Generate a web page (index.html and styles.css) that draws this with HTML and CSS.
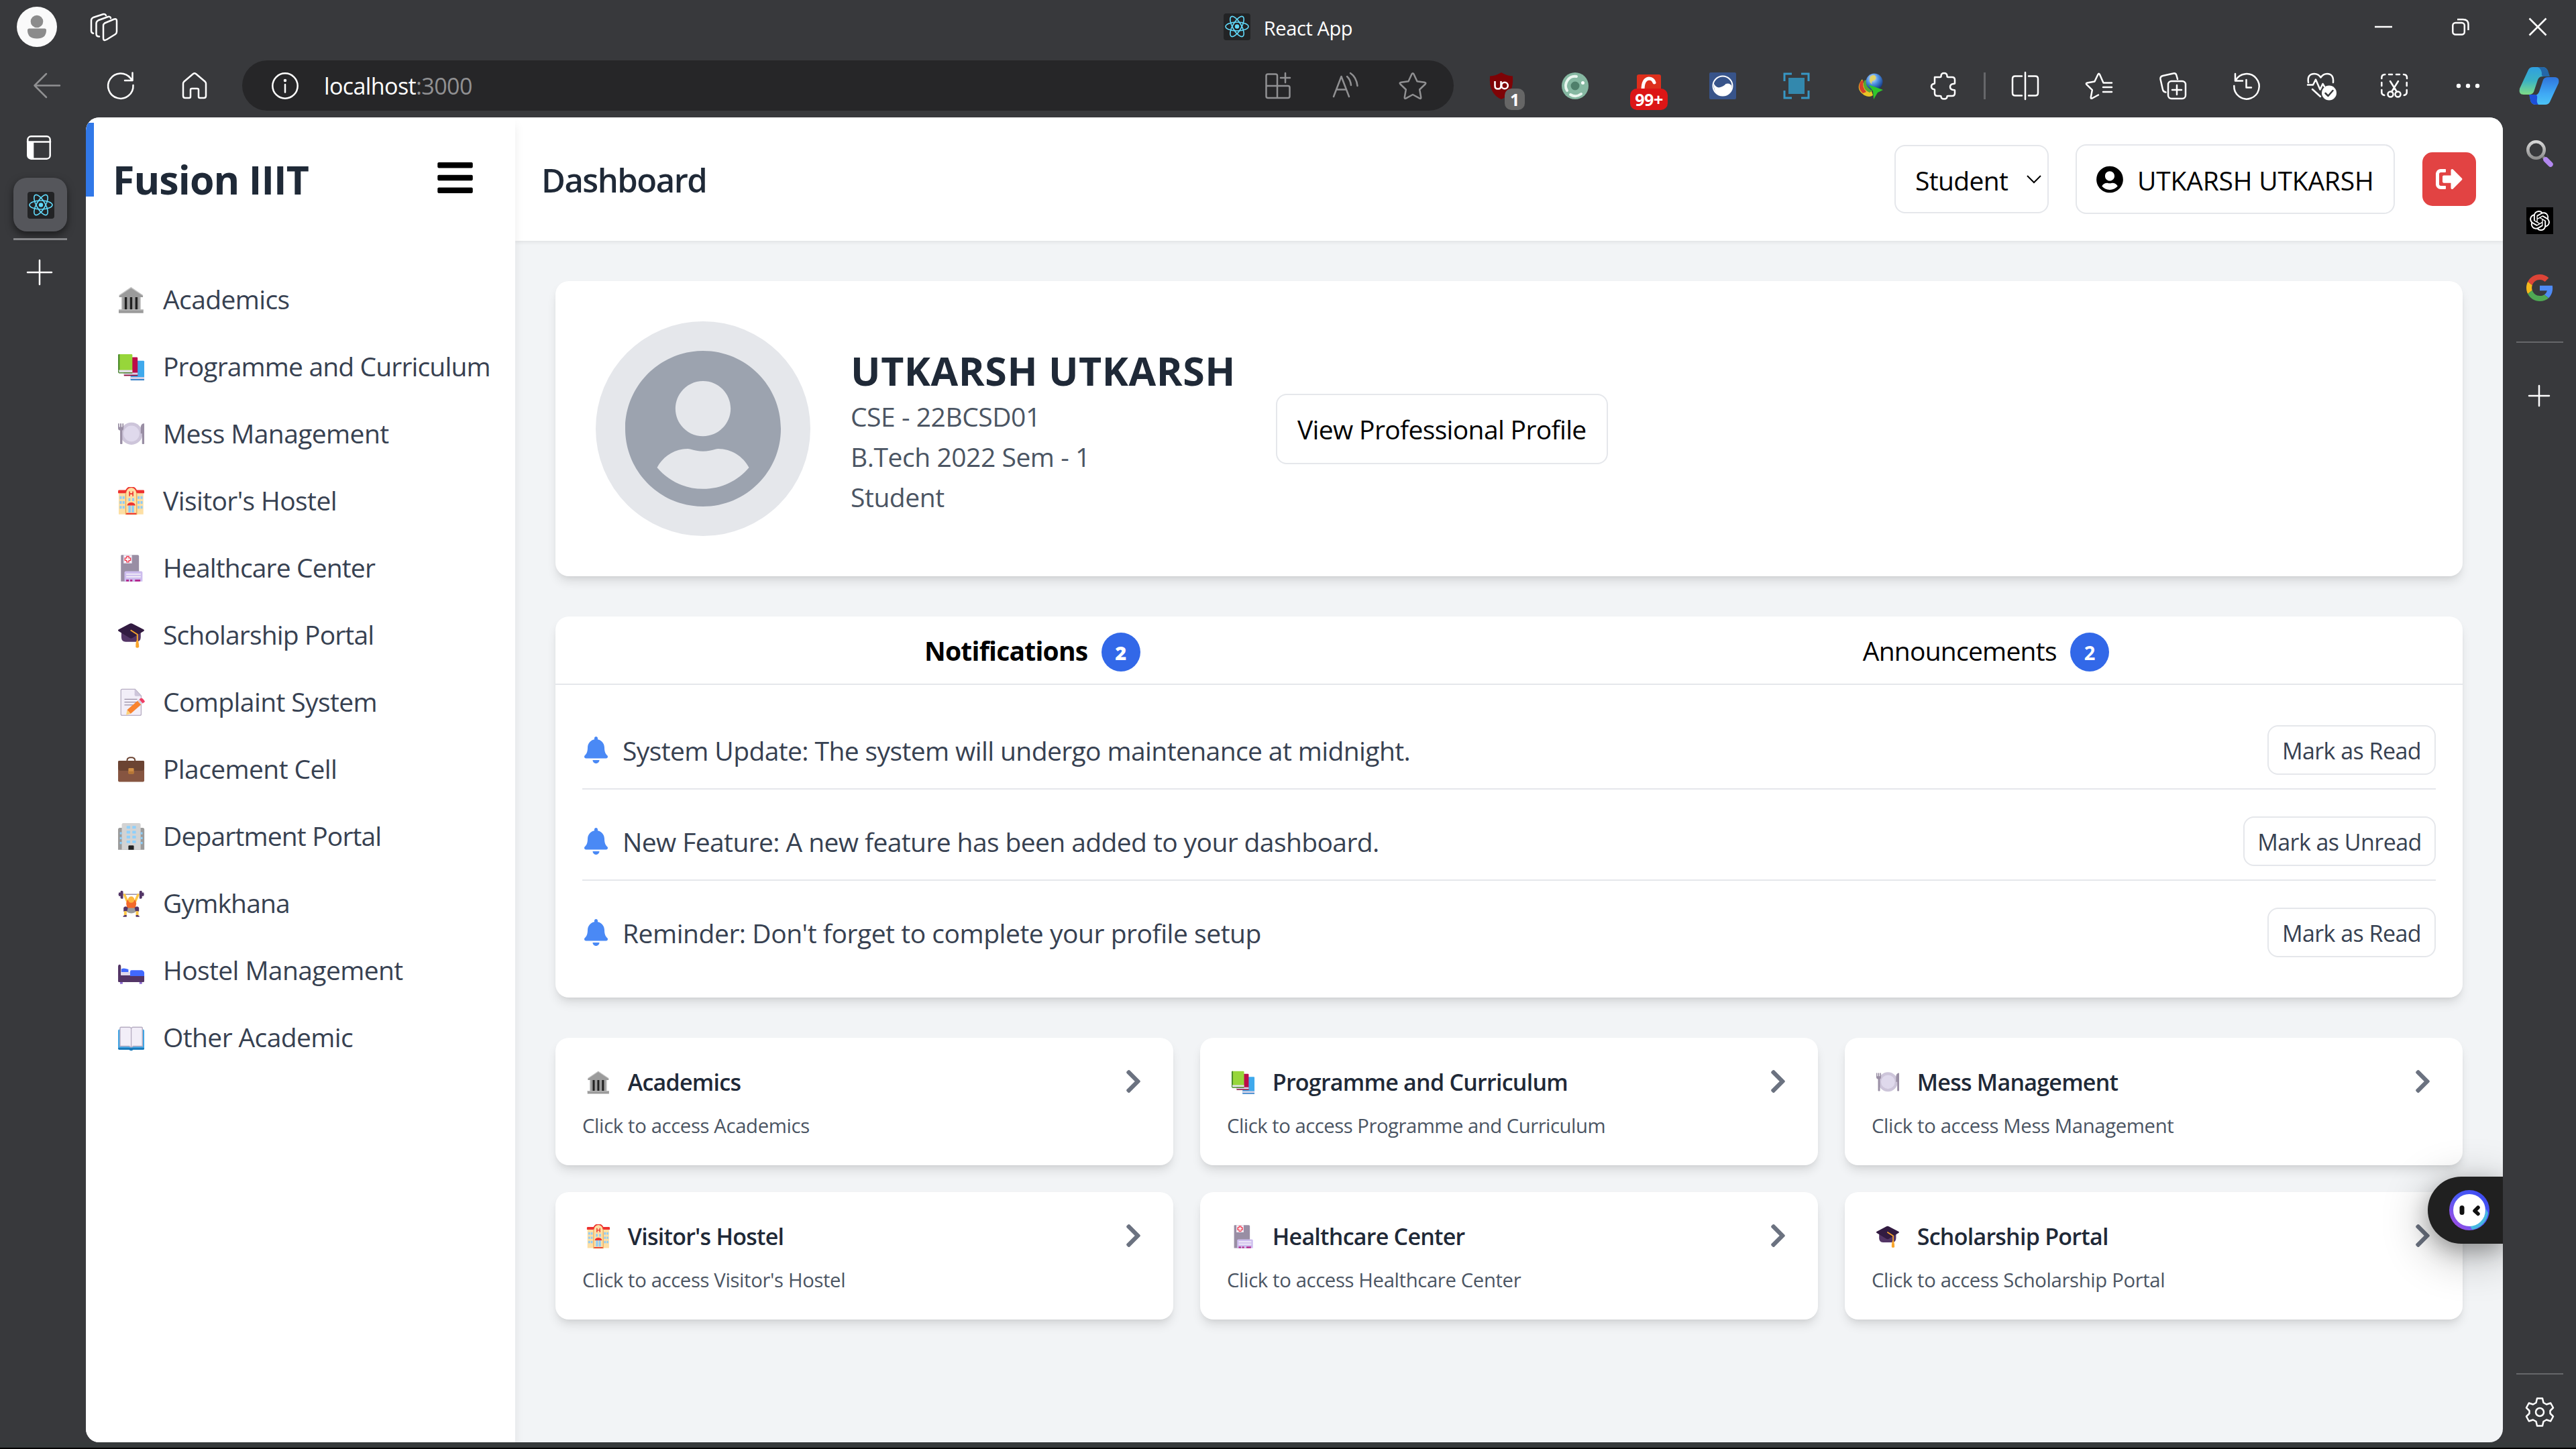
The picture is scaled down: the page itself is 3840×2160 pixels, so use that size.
FILE: index.html
```html
<!DOCTYPE html>
<html lang="en">
<head>
<meta charset="utf-8">
<title>React App</title>
<link rel="stylesheet" href="styles.css">
</head>
<body>
<svg class="defs" width="0" height="0" aria-hidden="true">
  <defs>
    <linearGradient id="lens" x1="0" y1="0" x2="0" y2="1"><stop offset="0" stop-color="#d6d6d6"/><stop offset="1" stop-color="#8f8f8f"/></linearGradient>
    <linearGradient id="cop1" x1="0" y1="0" x2="0" y2="1"><stop offset="0" stop-color="#2f9fe0"/><stop offset=".5" stop-color="#3bb3c4"/><stop offset="1" stop-color="#7fdc86"/></linearGradient>
    <linearGradient id="cop2" x1="0" y1="0" x2="0" y2="1"><stop offset="0" stop-color="#2f74dc"/><stop offset=".6" stop-color="#3fa9f5"/><stop offset="1" stop-color="#4cc3f5"/></linearGradient>
    <linearGradient id="bot" x1="0" y1="1" x2="1" y2="0"><stop offset="0" stop-color="#b44ae0"/><stop offset=".5" stop-color="#4d5bf5"/><stop offset="1" stop-color="#3b46f0"/></linearGradient>
    <radialGradient id="globe" cx=".4" cy=".3" r=".7"><stop offset="0" stop-color="#d8ecff"/><stop offset=".5" stop-color="#4d8fe0"/><stop offset="1" stop-color="#153a86"/></radialGradient>
  </defs>
  <symbol id="react" viewBox="0 0 40 40">
    <rect width="40" height="40" rx="4" fill="#222325"/>
    <g fill="none" stroke="#61dafb" stroke-width="1.6"><ellipse cx="20" cy="19.500" rx="17" ry="6.500"/><ellipse cx="20" cy="19.500" rx="17" ry="6.500" transform="rotate(60 20 19.500)"/><ellipse cx="20" cy="19.500" rx="17" ry="6.500" transform="rotate(120 20 19.500)"/></g>
    <circle cx="20" cy="19.500" r="3.200" fill="#61dafb"/>
  </symbol>
  <symbol id="user" viewBox="0 0 496 512"><path fill="currentColor" d="M248 8C111 8 0 119 0 256s111 248 248 248 248-111 248-248S385 8 248 8zm0 96c48.600 0 88 39.400 88 88s-39.400 88-88 88-88-39.400-88-88 39.400-88 88-88zm0 344c-58.700 0-111.300-26.600-146.500-68.200 18.800-35.400 55.600-59.800 98.500-59.800 2.400 0 4.800.4 7.100 1.100 13 4.200 26.600 6.900 40.900 6.900 14.300 0 28-2.700 40.900-6.900 2.300-.7 4.700-1.100 7.100-1.100 42.900 0 79.700 24.400 98.500 59.800C359.300 421.400 306.700 448 248 448z"/></symbol>
  <symbol id="bell" viewBox="0 0 448 512"><path fill="currentColor" d="M224 512c35.320 0 63.970-28.650 63.970-64H160.030c0 35.350 28.650 64 63.970 64zm215.390-149.710c-19.320-20.760-55.470-51.990-55.470-154.290 0-77.700-54.480-139.900-127.940-155.160V32c0-17.670-14.320-32-31.980-32s-31.980 14.330-31.980 32v20.840C118.560 68.100 64.080 130.300 64.080 208c0 102.300-36.150 133.530-55.470 154.290-6 6.450-8.660 14.160-8.610 21.710.11 16.400 12.980 32 32.100 32h383.800c19.120 0 32-15.600 32.100-32 .05-7.550-2.610-15.270-8.610-21.710z"/></symbol>
  <symbol id="chev" viewBox="0 0 320 512"><path fill="currentColor" d="M285.476 272.971L91.132 467.314c-9.373 9.373-24.569 9.373-33.941 0l-22.667-22.667c-9.357-9.357-9.375-24.522-.04-33.901L188.505 256 34.484 101.255c-9.335-9.379-9.317-24.544.04-33.901l22.667-22.667c9.373-9.373 24.569-9.373 33.941 0L285.475 239.030c9.373 9.372 9.373 24.568.001 33.941z"/></symbol>

  <symbol id="museum" viewBox="0 0 32 32">
    <path d="M2 11 15.500 2 29 11v2H2z" fill="#9b9b9b"/><path d="M2 11 15.500 2 29 11" fill="none" stroke="#c4c4c4" stroke-width="1"/>
    <path d="M4.500 13h22v14h-22z" fill="#9b9b9b"/><path d="M8.300 13h2.600v14H8.300zm6 0h2.600v14h-2.600zm6 0h2.600v14h-2.600z" fill="#212121"/>
    <path d="M4.500 13h1v14h-1zm21 0h1v14h-1z" fill="#d0d0d0"/><path d="M1.500 27h28v4h-28z" fill="#9b9b9b"/><path d="M1.500 27h28v1h-28z" fill="#b8b8b8"/>
  </symbol>
  <symbol id="books" viewBox="0 0 32 32">
    <path d="M15 9h14.500a1 1 0 0 1 1 1v20.500H15z" fill="#3fa9ec"/><path d="M15 27.500h15.500V30H15z" fill="#d9d3e6"/><path d="M15 30h15.500v1.200H15z" fill="#1f70c1"/>
    <path d="M7.500 5H22a1 1 0 0 1 1 1v19.800H7.500z" fill="#bb0c4a"/><path d="M7.500 22.500H23V25H7.500z" fill="#d9d3e6"/><path d="M7.500 25H23v1.200H7.500z" fill="#8d0a38"/>
    <path d="M1.500 1.500H16a1 1 0 0 1 1 1V22.500H1.500z" fill="#97d63a"/><path d="M.8 2.300q0-.8.8-.8h1V20h-1.800z" fill="#4d8c2c"/><path d="M1.500 19.500H17V22H1.500z" fill="#e4dff0"/><path d="M.8 20h1v2.200H17v1H2Q.8 23 .8 21.500z" fill="#3c7d25"/>
  </symbol>
  <symbol id="plate" viewBox="0 0 32 32">
    <circle cx="16" cy="15.500" r="12.600" fill="#cdc5da"/><circle cx="16" cy="15.500" r="9" fill="#dfd9ec"/>
    <path d="M.8 4h1.300v4h1V4h1.500v4h1V4H7v5.500q0 2-1.500 2.500L5.700 27q-1.300 1-2.600 0V12Q.8 11.500.8 9.500z" fill="#998ea4"/>
    <path d="M30.500 4v23q-1.200 1-2.500 0V15.500h-1.500V8q.5-4 4-4z" fill="#998ea4"/>
  </symbol>
  <symbol id="hotel" viewBox="0 0 32 32">
    <path d="M1.500 6h28v25h-28z" fill="#fddfa4"/><path d="M.8 4.500Q.8 3.500 2 3.500h27.500q1 0 1 1V7H.8z" fill="#ee3230"/>
    <path d="M9.500 31V6.500a6.200 6.200 0 0 1 12.400 0V31z" fill="#fddfa4" stroke="#e8aa55" stroke-width="1"/><path d="M9.300 6.500a6.400 6.400 0 0 1 12.800 0" fill="none" stroke="#ee3230" stroke-width="1.500"/>
    <path d="M13.800 5v5.500m3.800-5.500v5.500m-3.800-2.800h3.800" stroke="#ee3230" stroke-width="1.200"/>
    <path d="M2.600 10.500h2.300v3H2.600zm3.300 0h2.300v3H5.900zM2.600 16h2.300v3H2.600zm3.300 0h2.300v3H5.900zM2.600 21.500h2.300v3H2.600zm3.300 0h2.300v3H5.900zM23 10.500h2.300v3H23zm3.300 0h2.300v3h-2.300zM23 16h2.300v3H23zm3.300 0h2.300v3h-2.300zM23 21.500h2.300v3H23zm3.300 0h2.300v3h-2.300zM12.500 12.500h2.200v3.500h-2.200zm4.300 0H19v3.500h-2.200zM12.500 21h2.700v8h-2.700zm3.700 0h2.700v8h-2.700z" fill="#8ecbf7"/>
    <path d="M11 21q.5-3.500 4.700-3.500t4.700 3.500zM10 29.500h11.500V31H10z" fill="#ee3230"/>
  </symbol>
  <symbol id="clinic" viewBox="0 0 32 32">
    <path d="M4 2q0-1 1-1h18q1.500 0 1.500 1.500V31H4z" fill="#998ea4"/><path d="M7 1h9.500v9.500H7z" fill="#f2eef8"/>
    <path d="M10.600 2.500h2.400v2h2v2.600h-2v2h-2.400v-2h-2V4.500h2z" fill="#fff" stroke="#ee3248" stroke-width="1"/>
    <path d="M8 21q0-1.500 1.500-1.500h17.500q1.500 0 1.500 1.500v10H8z" fill="#cdbdee"/><path d="M10 22h16.500v1.500H10zm0 3h16.500v1.500H10z" fill="#f2eef8"/>
    <path d="M10 29h3v2h-3zm4.500 0h2.500v2h-2.500zm5.500 0h6v2h-6z" fill="#b4248c"/>
  </symbol>
  <symbol id="cap" viewBox="0 0 32 32">
    <path d="M4.500 13h22v5q0 5-5 5.500h-12q-5-.5-5-5.500z" fill="#533566"/><path d="M15.500 2.500q1 0 2 .6L30 9.500q1 .9 0 1.700L17 19q-1.500.8-3 0L1.200 11.200q-1-.8 0-1.700L13.500 3q1-.5 2-.5z" fill="#321b41"/>
    <path d="M15.500 10.500 22.700 15v8" fill="none" stroke="#f9a52c" stroke-width="1.500" stroke-linecap="round"/><path d="M21.500 22h2.200q1 5 .8 7.500-2 1.500-3.700 0-.3-3 .7-7.500z" fill="#f9a52c"/>
  </symbol>
  <symbol id="memo" viewBox="0 0 32 32">
    <path d="M4 2.500Q4 1 5.500 1H20l7 7.500v20.800q0 1.500-1.500 1.500h-20Q4 30.800 4 29.300z" fill="#f2eef8" stroke="#b6adc2" stroke-width="1"/><path d="M19.500 1.300 27 9h-6q-1.500 0-1.500-1.500z" fill="#cdc5da"/>
    <path d="M8 12.500h14.500M8 15.700h14M8 19h10" stroke="#998ea4" stroke-width="1"/>
    <path d="m11 24.500 12-10.500 4 4.500L15 29z" fill="#f9832e"/><path d="m11 24.500 4 4.500-5 1.200z" fill="#fbd17b"/><path d="m22.800 14.200 2-1.600 4 4.300-2 1.700z" fill="#d6d0de"/><path d="m24.800 12.600 1.500-1.100q1.500-.6 3 .8t2 3l-2.500 1.800z" fill="#ef3d64"/>
  </symbol>
  <symbol id="case" viewBox="0 0 32 32">
    <path d="M11 7V6q0-3 3-3.500h3Q20 3 20 6v1" fill="none" stroke="#6b4433" stroke-width="1.500"/><rect x=".8" y="6" width="29.700" height="24" rx="1.500" fill="#865541"/>
    <path d="M.8 7.500Q.8 6 2.300 6H29q1.500 0 1.500 1.500v7q0 3-3 3H4q-3.200 0-3.200-3z" fill="#6b4433"/><rect x="12.500" y="14.500" width="6.200" height="6.500" rx="1" fill="#d08f46"/><path d="M12.500 18h6.200v2q0 1-1 1h-4.200q-1 0-1-1z" fill="#b67636"/>
  </symbol>
  <symbol id="office" viewBox="0 0 32 32">
    <path d="M.8 8q0-2 2-2h26q1.800 0 1.800 2v23H.8z" fill="#9b9b9b"/><path d="M5 2.500Q5 .8 6.700.8h18q1.700 0 1.700 1.700V31H5z" fill="#d3d3d3"/>
    <path d="M10.500 4h4v3h-4zm6.500 0h4v3h-4zm-6.500 5.500h4v3h-4zm6.500 0h4v3h-4zM10.500 15h4v3h-4zm6.500 0h4v3h-4zm-6.500 5.500h4v3h-4zm6.500 0h4v3h-4zM2.800 11H5v2.500H2.800zm0 5.500H5V19H2.800zm0 5.500H5v2.500H2.800zM26.400 11h2.200v2.500h-2.200zm0 5.500h2.200V19h-2.200zm0 5.500h2.200v2.500h-2.200z" fill="#8ed0fb"/>
    <path d="M12.500 27q0-1 1-1h4.200q1 0 1 1v4h-6.200z" fill="#212121"/>
  </symbol>
  <symbol id="lift" viewBox="0 0 32 32">
    <path d="M1 5.500h29.500" stroke="#998ea4" stroke-width="1.200"/><path d="M1.500 3.500h2V2q1-1.500 3 0v8q-2 1-3-.5V7.500h-2zM30 3.500h-2V2q-1-1.500-3 0v8q2 1 3-.5V7.500h2z" fill="#533566"/>
    <path d="m8 6 4 9m11.500-9-4 9" stroke="#fdc748" stroke-width="2.800" stroke-linecap="round"/><path d="M11 12h9.500l1 4-1.500 7H11.500L10 16z" fill="#f4692a"/><circle cx="15.700" cy="11.500" r="3.600" fill="#fdb73e"/>
    <path d="M11 21h9.500l2 1.500q-1.500 4.500-6.700 4.500T9 22.500z" fill="#9b9b9b"/><path d="M7 20.500q2-2.500 5 0l-1 4-4 .5zM24.500 20.500q-2-2.500-5 0l1 4 4 .5z" fill="#533566"/>
    <path d="M7.500 24.500h3v5h-3zm13.500 0h3v5h-3z" fill="#fdc748"/><path d="M6.500 31v-1l2-1h2v2zm18.500 0v-1l-2-1h-2v2z" fill="#533566"/>
  </symbol>
  <symbol id="bed" viewBox="0 0 32 32">
    <path d="M3 28h3v3H3zm22 0h3v3h-3z" fill="#8c6bd0"/><path d="M.8 11Q.8 9 2.500 9 4 9 4 11v10h26.500v7q0 1-1 1H1.800q-1 0-1-1z" fill="#533566"/>
    <path d="M4 17.500h11v3.800H4z" fill="#dfd9ec"/><path d="M4.500 17.500V14q3-1.500 8 .5v3z" fill="#4169ff"/><path d="M14.500 17q0-1.500 1.500-1.500h12q2.500 1 2.500 3V22h-16z" fill="#4169ff"/>
  </symbol>
  <symbol id="book" viewBox="0 0 32 32">
    <path d="M.8 8q0-1.500 1.500-1.500H29q1.500 0 1.500 1.500v20q0 1.500-1.500 1.500H18q-2.300 2.200-4.800 0H2.300Q.8 29.500.8 28z" fill="#3fa4e4"/><path d="M.8 27.500h29.700v.8q0 1.200-1.200 1.200H18q-2.300 2.200-4.800 0H2Q.8 29.500.8 28z" fill="#1878b8"/>
    <path d="M3 5q0-1 1-1h10l1.700 1L17.400 4h10q1 0 1 1v20.500H18q-2.300 2-4.600 0H3z" fill="#f2eef8" stroke="#b6adc2" stroke-width="1.100"/><path d="M15.700 5v21" stroke="#b6adc2" stroke-width="1"/>
  </symbol>
</svg>

<header class="titlebar">
  <div class="title-left">
    <span class="avatar-sm"><svg viewBox="0 0 60 60"><circle cx="30" cy="22" r="9.300" fill="#8c8c8c"/><path d="M18.500 32.500h23q2.500 0 2.500 2.500 0 12.500-14 12.500T16 35q0-2.500 2.500-2.500z" fill="#8c8c8c"/></svg></span>
    <svg class="ic" viewBox="0 0 40 40"><path d="M21 14.500 34 9q5-2 5 2v16q0 2.500-2 4L24 39q-5 2.500-5-2V18q0-2 2-3.500zM13 34.500q-4.500 0-4.500-4V15q0-3 3-4.800L26 5q3.500-1 4 2M4 29.800Q1 29 1 26V10.500q0-3 3-4.500L18.500 1.300Q22 .5 23 3"/></svg>
  </div>
  <div class="tab-title"><svg width="40" height="40"><use href="#react"/></svg><span>React App</span></div>
  <div class="win-buttons">
    <span><svg width="26" height="26" viewBox="0 0 26 26" class="thin"><path d="M0 13h26"/></svg></span>
    <span><svg width="26" height="26" viewBox="0 0 26 26" class="thin"><rect x="1.300" y="7" width="17.500" height="17.500" rx="4"/><path d="M8 2h8.500Q24.500 2 24.500 9.500V18"/></svg></span>
    <span><svg width="26" height="26" viewBox="0 0 26 26" class="thin"><path d="m.5.5 25 25m0-25-25 25"/></svg></span>
  </div>
</header>

<nav class="toolbar">
  <span class="cell dim"><svg class="ic" viewBox="0 0 40 40"><path d="M39 19.500H1.500M19 2 1.500 19.500 19 37"/></svg></span>
  <span class="cell"><svg class="ic" viewBox="0 0 40 40"><path d="M38.500 19a18.700 18.700 0 1 1-4-10.500L37 12M37.500.5V12H26"/></svg></span>
  <span class="cell"><svg class="ic" viewBox="0 0 40 40"><path d="M3 16.500Q3 15 4.500 13.500L18 2q2-1.500 4 0l13.500 11.500Q37 15 37 16.500V35q0 3-3 3h-6q-2 0-2-2V26q0-2-2-2h-8q-2 0-2 2v10q0 2-2 2H6q-3 0-3-3z"/></svg></span>
  <div class="address">
    <svg class="ic" viewBox="0 0 40 40"><circle cx="20" cy="20" r="18.700"/><path d="M20 18v11.500"/><circle cx="20" cy="12" r="1" fill="#fff"/></svg>
    <span class="url">localhost<i>:3000</i></span>
    <span class="acell dim"><svg class="ic" viewBox="0 0 40 40"><path d="M4 2.500h11.500q2.500 0 2.500 2.500v15H1.500V5q0-2.500 2.500-2.500zM1.500 20H18v18H4q-2.500 0-2.500-2.500zM18 20h16q2.500 0 2.500 2.500v13q0 2.500-2.500 2.500H18zM30 1v14M23 8h14"/></svg></span>
    <span class="acell dim"><svg class="ic" viewBox="0 0 40 40"><path d="m2 36 11.500-30L25 36M6 25.500h15M22 6q5 4.500 6 13M27 1q9 6 10.500 19"/></svg></span>
    <span class="acell dim"><svg class="ic" viewBox="0 0 40 40"><path d="M18.500 2.500q1.500-2.500 3 0l5 10.700 11 1.500q3 .6 1 2.800l-8.300 8 2 11.500q.4 2.700-2 1.600L20 33l-10.200 5.600q-2.400 1.100-2-1.600l2-11.500-8.300-8q-2-2.200 1-2.800l11-1.500z"/></svg></span>
  </div>
  <span class="cell first"><svg class="ext" viewBox="0 0 40 40"><path d="M20 0q8 5 17 5.500Q39 32 20 40 1 32 3 5.500 12 5 20 0z" fill="#7e0306"/><g fill="none" stroke="#fff" stroke-width="2.600"><path d="M10.500 13v7q0 4.500 4.500 4.500t4.500-4.500v-7"/><circle cx="25" cy="19.500" r="4.800"/></g></svg><b class="badge grey">1</b></span>
  <span class="cell"><svg class="ext" viewBox="0 0 40 40"><circle cx="20" cy="20" r="20" fill="#86b8a2"/><circle cx="20" cy="20" r="6.500" fill="#4f7f6b"/><path d="M22 6A14 14 0 0 0 8 27m5 6q8 5 16-1" fill="none" stroke="#e9f6ef" stroke-width="4" stroke-linecap="round"/><circle cx="31.500" cy="15.500" r="2.500" fill="#fff"/></svg></span>
  <span class="cell"><svg class="ext" viewBox="0 0 40 40"><path d="M2 6q0-3 3-3h30q3 0 3 3v20H2z" fill="#dd2f1c"/><path d="M11 26q0-16 9-17 6 0 8 6" fill="none" stroke="#fff" stroke-width="5" stroke-linecap="round"/></svg><b class="badge red">99+</b></span>
  <span class="cell"><svg class="ext" viewBox="0 0 40 40"><rect width="40" height="40" rx="2" fill="#38548a"/><circle cx="20" cy="20" r="14.500" fill="#38548a" stroke="#fff" stroke-width="2"/><path d="M6.500 16q4 8 10 6t8-5q6-2 9 3 0 14-13.500 14T6.500 16z" fill="#fff"/></svg></span>
  <span class="cell"><svg class="ext" viewBox="0 0 40 40"><path d="M8 8h24v24H8z" fill="#3388ad"/><path d="M2 13V2h11m14 0h11v11m0 14v11H27m-14 0H2V27" fill="none" stroke="#3797c4" stroke-width="3"/></svg></span>
  <span class="cell"><svg class="ext" viewBox="0 0 40 40"><path d="M8 10q-12 14 3 24 8 4 13 0l-2-6q-10 2-11-8z" fill="#e8c526"/><path d="M6 13q-6 10 3 18l5-2q-7-8-4-17z" fill="#d6402a"/><path d="M11 12q-4 12 8 18l4-3Q12 21 15 11z" fill="#56a832"/><circle cx="26" cy="14" r="12.500" fill="url(#globe)"/><path d="M20 6q6-4 8 0t-3 6-2 6q-6-3-3-12z" fill="#e3d469"/><path d="m17 18 22 8-8 4-6 10-1-12z" fill="#2fc62b"/></svg></span>
  <span class="cell"><svg class="ic" viewBox="0 0 40 40"><path d="M6 7h8q1.500 0 1.500-1.500Q15.500 1 20 1t4.500 4.500Q24.500 7 26 7h6q4 0 4 4v5q0 1-2 1-5 .5-5 4.500t5 4.500q2 0 2 1v4q0 4-4 4h-6q-1.500 0-1.500 1 0 3.500-4.500 3.500T15.500 36q0-1-1.500-1h-4q-4 0-4-4v-4.500q0-1.500-1.500-1.500-3.500-.5-3.500-4t3.500-4Q6 17 6 15.500z"/></svg></span>
  <span class="divider"></span>
  <span class="cell"><svg class="ic" viewBox="0 0 40 40"><path d="M15 5.500H5q-4 0-4 4v21q0 4 4 4h10M25 5.500h10q4 0 4 4v21q0 4-4 4H25M20 0v40"/></svg></span>
  <span class="cell"><svg class="ic" viewBox="0 0 40 40"><path d="M39 15.500H26.500L21 3q-1.300-2.500-2.600 0l-5 10.500-11 2q-2.600.6-.8 2.700l8.200 8-2 10.800q-.3 2.600 2 1.500L19 33.500M26 22h13M26 29h13"/></svg></span>
  <span class="cell"><svg class="ic" viewBox="0 0 40 40"><rect x="13" y="13" width="26" height="26" rx="5"/><path d="M26 19v14m-7-7h14M27 10l-1.500-5.500Q24.500.5 20.500 1.500L5 5Q1 6 1.500 10L5 25.500q.7 3.500 4.500 4"/></svg></span>
  <span class="cell"><svg class="ic" viewBox="0 0 40 40"><path d="M3 2v10.500h11M3.500 12A18.700 18.700 0 1 1 1.300 20M19.500 11v11.500H27"/></svg></span>
  <span class="cell"><svg class="ic wide" viewBox="0 0 44 44"><path d="M2 16Q0 3 11 3q6 0 9.500 5.500Q24 3 30 3q10 0 9 13M1 19.500h8l4-8 6.500 15 4-8.500 2.500 4M8 26l12 11"/><circle cx="33" cy="31.500" r="11" fill="#fff" stroke="none"/><path d="m27.500 32 4 4 7-8" stroke="#38393c"/></svg></span>
  <span class="cell"><svg class="ic" viewBox="0 0 40 40"><path d="M1.300 9V8q0-5 5-5M12 3h5m6 0h5m6 0q5 0 5 5v1M1.300 15v5m37.400-5v5M1.300 26v4q0 3 4 4M38.700 26v4q0 3-4 4M14 13l10 16m2-16L16 29"/><circle cx="14.500" cy="32.500" r="4"/><circle cx="25.500" cy="32.500" r="4"/></svg></span>
  <span class="cell"><svg class="ic" viewBox="0 0 40 40"><g fill="#fff" stroke="none"><circle cx="6" cy="20" r="3.200"/><circle cx="20" cy="20" r="3.200"/><circle cx="34" cy="20" r="3.200"/></g></svg></span>
  <span class="cell cop"><svg width="60" height="56" viewBox="0 0 60 56"><path d="M14 4q2-4 7-4h14q7 0 8 7l1 7h-9q-5 0-7 5l-6 18q-2 4-7 4H7q-8 0-6-9z" fill="url(#cop1)"/><path d="M28 0h7q7 0 9 8l2 6h-9q-4 0-3-5-1-7-6-9z" fill="#2467a8"/><path d="M46 52q-2 4-7 4H25q-7 0-8-7l-1-7h7q5 0 7-5l6-18q2-4 7-4h10q8 0 6 9z" fill="url(#cop2)"/><path d="M15 41h9q4 0 3 6-1 6 2 9h-4q-7 0-8-7z" fill="#1d4ed8"/></svg></span>
</nav>

<div class="body">
  <aside class="vtabs">
    <svg class="ic" width="36" height="36" viewBox="0 0 36 36"><rect x="1.300" y="1.300" width="33.400" height="33.400" rx="5"/><path d="M1 9.500h34"/><path d="M1.500 9h8.800v25.500H6q-4.500 0-4.500-4.500z" fill="#fff" stroke="none"/></svg>
    <span class="vtab"><svg width="40" height="40"><use href="#react"/></svg></span>
    <span class="vline"></span>
    <svg class="ic plus" width="36" height="36" viewBox="0 0 36 36"><path d="M18 0v36M0 18h36"/></svg>
  </aside>

  <div class="page">
    <span class="focus-bar"></span>
    <aside class="sidebar">
      <div class="brand"><h1>Fusion IIIT</h1>
        <svg width="53" height="60" viewBox="0 0 448 512"><path d="M16 132h416c8.800 0 16-7.200 16-16V76c0-8.800-7.200-16-16-16H16C7.200 60 0 67.200 0 76v40c0 8.800 7.200 16 16 16zm0 160h416c8.800 0 16-7.200 16-16v-40c0-8.800-7.200-16-16-16H16c-8.800 0-16 7.200-16 16v40c0 8.800 7.200 16 16 16zm0 160h416c8.800 0 16-7.200 16-16v-40c0-8.800-7.200-16-16-16H16c-8.800 0-16 7.200-16 16v40c0 8.800 7.200 16 16 16z"/></svg>
      </div>
      <ul class="menu">
        <li><svg><use href="#museum"/></svg><span>Academics</span></li>
        <li><svg><use href="#books"/></svg><span class="tight">Programme and Curriculum</span></li>
        <li><svg><use href="#plate"/></svg><span>Mess Management</span></li>
        <li><svg><use href="#hotel"/></svg><span>Visitor's Hostel</span></li>
        <li><svg><use href="#clinic"/></svg><span class="tight">Healthcare Center</span></li>
        <li><svg><use href="#cap"/></svg><span class="tight">Scholarship Portal</span></li>
        <li><svg><use href="#memo"/></svg><span>Complaint System</span></li>
        <li><svg><use href="#case"/></svg><span>Placement Cell</span></li>
        <li><svg><use href="#office"/></svg><span class="tight">Department Portal</span></li>
        <li><svg><use href="#lift"/></svg><span class="tight">Gymkhana</span></li>
        <li><svg><use href="#bed"/></svg><span>Hostel Management</span></li>
        <li><svg><use href="#book"/></svg><span>Other Academic</span></li>
      </ul>
    </aside>

    <div class="main">
      <header class="topbar">
        <h2>Dashboard</h2>
        <div class="role"><span>Student</span><svg width="22" height="12" viewBox="0 0 22 12"><path d="m1 1 10 10L21 1" fill="none" stroke="#000" stroke-width="2"/></svg></div>
        <div class="account"><svg width="40" height="41"><use href="#user"/></svg><span>UTKARSH UTKARSH</span></div>
        <div class="logout"><svg width="40" height="40" viewBox="0 0 512 512"><path fill="#fff" d="M497 273L329 441c-15 15-41 4.500-41-17v-96H152c-13.300 0-24-10.700-24-24v-96c0-13.300 10.700-24 24-24h136V88c0-21.400 25.900-32 41-17l168 168c9.300 9.400 9.300 24.600 0 34zM192 436v-40c0-6.600-5.400-12-12-12H96c-17.700 0-32-14.300-32-32V160c0-17.700 14.300-32 32-32h84c6.600 0 12-5.400 12-12V76c0-6.600-5.400-12-12-12H96c-53 0-96 43-96 96v192c0 53 43 96 96 96h84c6.600 0 12-5.400 12-12z"/></svg></div>
      </header>

      <div class="content">
        <section class="card profile">
          <div class="avatar"><svg width="232" height="240"><use href="#user"/></svg></div>
          <div class="who"><h3>UTKARSH UTKARSH</h3><p>CSE - 22BCSD01</p><p>B.Tech 2022 Sem - 1</p><p>Student</p></div>
          <div class="view-btn"><span>View Professional Profile</span></div>
        </section>

        <section class="card notices">
          <div class="tabs">
            <div class="tab active"><span>Notifications</span><b>2</b></div>
            <div class="tab"><span>Announcements</span><b>2</b></div>
          </div>
          <ul>
            <li><svg><use href="#bell"/></svg><p>System Update: The system will undergo maintenance at midnight.</p><em class="read">Mark as Read</em></li>
            <li><svg><use href="#bell"/></svg><p>New Feature: A new feature has been added to your dashboard.</p><em class="unread">Mark as Unread</em></li>
            <li><svg><use href="#bell"/></svg><p class="loose">Reminder: Don't forget to complete your profile setup</p><em class="read">Mark as Read</em></li>
          </ul>
        </section>

        <section class="modules">
          <div class="card module"><div class="mhead"><svg class="em"><use href="#museum"/></svg><h4>Academics</h4><svg class="go"><use href="#chev"/></svg></div><p>Click to access Academics</p></div>
          <div class="card module"><div class="mhead"><svg class="em"><use href="#books"/></svg><h4>Programme and Curriculum</h4><svg class="go"><use href="#chev"/></svg></div><p class="long">Click to access Programme and Curriculum</p></div>
          <div class="card module"><div class="mhead"><svg class="em"><use href="#plate"/></svg><h4>Mess Management</h4><svg class="go"><use href="#chev"/></svg></div><p>Click to access Mess Management</p></div>
          <div class="card module"><div class="mhead"><svg class="em"><use href="#hotel"/></svg><h4>Visitor's Hostel</h4><svg class="go"><use href="#chev"/></svg></div><p>Click to access Visitor's Hostel</p></div>
          <div class="card module"><div class="mhead"><svg class="em"><use href="#clinic"/></svg><h4>Healthcare Center</h4><svg class="go"><use href="#chev"/></svg></div><p>Click to access Healthcare Center</p></div>
          <div class="card module"><div class="mhead"><svg class="em"><use href="#cap"/></svg><h4>Scholarship Portal</h4><svg class="go"><use href="#chev"/></svg></div><p>Click to access Scholarship Portal</p></div>
        </section>
      </div>
    </div>

    <div class="assistant"><svg width="60" height="60" viewBox="0 0 60 60"><circle cx="30" cy="30" r="30" fill="url(#bot)"/><path d="M58 34A29 29 0 0 1 34 59l-3-6a26 26 0 0 0 24-25z" fill="#46b8e0"/><circle cx="30" cy="30" r="24" fill="#fff"/><path d="M19 26.500v7" stroke="#111" stroke-width="7" stroke-linecap="round"/><path d="m43 26-5 5 5 4.500" fill="none" stroke="#111" stroke-width="5.500" stroke-linecap="round" stroke-linejoin="round"/></svg></div>
  </div>

  <aside class="rail">
    <span class="rcell"><svg width="40" height="40" viewBox="0 0 40 40"><path d="m25 25 4 4" stroke="#8b8b8b" stroke-width="4"/><circle cx="14.500" cy="14.500" r="12.200" fill="none" stroke="url(#lens)" stroke-width="4.600"/><path d="m29 29 7 7" stroke="#b388f0" stroke-width="7.500" stroke-linecap="round"/></svg></span>
    <span class="rcell"><svg width="40" height="40" viewBox="0 0 40 40"><path fill="#000" d="M0 0h40v40H0z"/><path transform="translate(5 5) scale(1.250)" fill="#fff" d="M22.282 9.821a5.985 5.985 0 0 0-.516-4.911 6.046 6.046 0 0 0-6.510-2.900A6.065 6.065 0 0 0 4.981 4.182a5.985 5.985 0 0 0-3.998 2.900 6.046 6.046 0 0 0 .743 7.097 5.980 5.980 0 0 0 .511 4.911 6.051 6.051 0 0 0 6.515 2.900A5.985 5.985 0 0 0 13.260 24a6.056 6.056 0 0 0 5.772-4.206 5.989 5.989 0 0 0 3.998-2.900 6.056 6.056 0 0 0-.748-7.073zm-9.022 12.608a4.476 4.476 0 0 1-2.876-1.041l.142-.080 4.778-2.758a.795.795 0 0 0 .393-.681v-6.737l2.020 1.169a.071.071 0 0 1 .038.052v5.583a4.504 4.504 0 0 1-4.495 4.494zm-9.661-4.125a4.471 4.471 0 0 1-.535-3.014l.142.085 4.783 2.758a.771.771 0 0 0 .781 0l5.843-3.369v2.332a.080.080 0 0 1-.033.062L9.740 19.950a4.499 4.499 0 0 1-6.141-1.646zM2.341 7.896a4.485 4.485 0 0 1 2.366-1.973V11.600a.766.766 0 0 0 .388.677l5.814 3.354-2.020 1.169a.076.076 0 0 1-.071 0l-4.830-2.787A4.504 4.504 0 0 1 2.341 7.872zm16.596 3.856L13.104 8.364 15.119 7.200a.076.076 0 0 1 .071 0l4.830 2.791a4.494 4.494 0 0 1-.677 8.104v-5.677a.790.790 0 0 0-.407-.667zm2.011-3.023l-.142-.085-4.774-2.782a.776.776 0 0 0-.785 0L9.409 9.230V6.897a.066.066 0 0 1 .028-.062l4.830-2.787a4.499 4.499 0 0 1 6.680 4.660zM8.307 12.863l-2.020-1.164a.080.080 0 0 1-.038-.057V6.074a4.499 4.499 0 0 1 7.376-3.454l-.142.081L8.704 5.459a.795.795 0 0 0-.393.681zm1.098-2.365l2.602-1.500 2.607 1.500v2.999l-2.597 1.500-2.607-1.500z"/></svg></span>
    <span class="rcell"><svg width="40" height="40" viewBox="0 0 48 48"><path fill="#dc4437" d="M24 9.500c3.540 0 6.710 1.220 9.210 3.600l6.850-6.850C35.900 2.380 30.470 0 24 0 14.620 0 6.510 5.380 2.560 13.220l7.980 6.190C12.430 13.720 17.740 9.500 24 9.500z"/><path fill="#4e8af4" d="M46.980 24.550c0-1.570-.15-3.090-.38-4.550H24v9.020h12.940c-.58 2.960-2.260 5.480-4.780 7.180l7.730 6c4.510-4.180 7.090-10.360 7.090-17.650z"/><path fill="#f5b81c" d="M10.530 28.590c-.48-1.450-.76-2.990-.76-4.590s.27-3.140.76-4.590l-7.980-6.190C.92 16.460 0 20.120 0 24s.92 7.540 2.560 10.780l7.970-6.190z"/><path fill="#4fa854" d="M24 48c6.480 0 11.930-2.130 15.890-5.810l-7.730-6c-2.150 1.450-4.920 2.300-8.160 2.300-6.260 0-11.570-4.220-13.470-9.910l-7.980 6.190C6.510 42.620 14.620 48 24 48z"/></svg></span>
    <span class="rline"></span>
    <span class="rcell add"><svg class="ic" width="30" height="30" viewBox="0 0 30 30"><path d="M15 0v30M0 15h30"/></svg></span>
    <span class="rline bottom"></span>
    <span class="rcell gear"><svg class="ic" width="42" height="44" viewBox="0 0 42 44"><path d="M17 1.500h8l1.500 6.500 4.500 2.500 6.200-2L41 15.500 36.500 20v4l4.500 4.500-3.800 7-6.200-2-4.500 2.500L25 42.500h-8L15.500 36 11 33.500l-6.200 2-3.800-7L5.500 24v-4L1 15.500l3.800-7 6.200 2L15.500 8z" stroke-linejoin="round"/><circle cx="21" cy="22" r="6"/></svg></span>
  </aside>
</div>
<footer class="edge"></footer>
</body>
</html>
```
FILE: styles.css
```css
* { box-sizing: border-box; }

body {
  margin: 0;
  width: 3840px;
  height: 2160px;
  overflow: hidden;
  display: flex;
  flex-direction: column;
  background: #38393c;
  font-family: "Open Sans", "Noto Sans", sans-serif;
  font-size: 39px;
  letter-spacing: -0.65px;
  line-height: 60px;
  color: #000;
}

h1, h2, h3, h4, p, ul { margin: 0; padding: 0; }
ul { list-style: none; }
svg { display: block; flex: none; overflow: visible; }
span, p, h1, h2, h3, h4, em { white-space: nowrap; }
.defs { position: absolute; overflow: hidden; }

.ic { fill: none; stroke: #fff; stroke-width: 2.5; stroke-linecap: round; stroke-linejoin: round; }
.thin { fill: none; stroke: #fff; stroke-width: 2.5; }
.dim .ic { stroke: #909092; }

/* Window title bar */
.titlebar { height: 80px; flex: none; display: grid; grid-template-columns: 1fr auto 1fr; align-items: center; }
.title-left { display: flex; align-items: center; gap: 50px; padding-left: 25px; }
.title-left .ic { width: 40px; height: 40px; }
.avatar-sm { width: 60px; height: 60px; border-radius: 50%; background: #fafafa; }
.tab-title { display: flex; align-items: center; gap: 20px; color: #fff; font-size: 29px; letter-spacing: -0.4px; }
.tab-title span { padding-top: 4px; }
.win-buttons { display: flex; justify-content: flex-end; }
.win-buttons span { width: 115px; display: flex; justify-content: center; }

/* Toolbar */
.toolbar { height: 95px; flex: none; display: flex; align-items: center; padding-left: 15px; }
.cell { width: 110px; height: 75px; position: relative; display: flex; align-items: center; justify-content: center; }
.cell .ic, .address .ic, .ext { width: 40px; height: 40px; }
.cell .wide { width: 44px; height: 44px; margin: 3px 0 0 4px; }
.cell.first { margin-left: 16px; }
.cell.cop { width: 101px; }
.divider { width: 3px; height: 40px; margin: 0 4px; background: #66676a; }
.address { width: 1806px; height: 75px; margin-left: 16px; padding: 0 11px 0 44px; border-radius: 38px; background: #262628; display: flex; align-items: center; }
.url { margin: 0 auto 0 38px; color: #fff; font-size: 34px; letter-spacing: -0.6px; }
.url i { font-style: normal; color: #909092; }
.acell { width: 100px; display: flex; justify-content: center; }
.badge { position: absolute; top: 42px; height: 32px; border-radius: 10px; color: #fff; font-size: 25px; line-height: 32px; text-align: center; letter-spacing: -0.5px; }
.badge.grey { left: 60px; width: 30px; background: #666; }
.badge.red { left: 27px; width: 56px; background: #dc1616; }

.body { flex: 1; min-height: 0; display: flex; }
.edge { height: 10px; flex: none; background: #363a3b; border-bottom: 2px solid #000; }

/* Vertical tab strip */
.vtabs { width: 128px; padding: 27px 0 0 20px; display: flex; flex-direction: column; }
.vtabs > .ic { margin-left: 20px; }
.vtab { width: 80px; height: 80px; margin-top: 27px; padding: 2px 0 0 2px; border-radius: 20px; background: #55565b; box-shadow: 0 5px 12px rgba(0, 0, 0, .5); display: flex; align-items: center; justify-content: center; }
.vline { width: 80px; height: 3px; margin-top: 10px; background: #86878a; }
.vtabs > .plus { margin: 30px 0 0 21px; }

/* Web page surface */
.page { width: 3603px; position: relative; overflow: hidden; border-radius: 20px; background: #f2f4f6; display: flex; }
.focus-bar { position: absolute; left: 0; top: 8px; width: 12px; height: 110px; background: #3178e8; z-index: 2; }
.sidebar { width: 640px; flex: none; background: #fff; box-shadow: 0 10px 15px -2px rgba(0, 0, 0, .1); z-index: 1; }
.brand { height: 184px; display: flex; justify-content: space-between; padding: 60px 63px 0 40px; }
.brand h1 { font-size: 59px; font-weight: 700; letter-spacing: -0.9px; color: #1f2937; padding-top: 2px; }
.menu { padding-top: 38px; }
.menu li { height: 100px; padding-left: 47px; display: flex; align-items: center; gap: 26px; color: #374151; }
.menu svg { width: 42px; height: 42px; }
.menu span { padding-bottom: 2px; letter-spacing: -0.6px; }
.menu .tight { letter-spacing: -0.85px; }

.main { flex: 1; display: flex; flex-direction: column; }
.topbar { height: 184px; flex: none; display: flex; align-items: center; padding: 0 40px 0 39px; background: #fff; box-shadow: 0 2px 6px rgba(0, 0, 0, .08); }
.topbar h2 { margin-right: auto; font-size: 49px; font-weight: 600; letter-spacing: -1.5px; color: #1f2937; padding-top: 2px; }
.role, .account, .view-btn { border: 2.5px solid #e5e7eb; border-radius: 16px; background: #fff; display: flex; align-items: center; }
.role { width: 230px; height: 102px; padding: 4px 9px 0 29px; justify-content: space-between; }
.role svg { margin-bottom: 4px; }
.account { width: 476px; height: 104px; margin-left: 40px; padding-left: 29px; gap: 21px; letter-spacing: -0.2px; }
.account span { padding-top: 3px; }
.logout { width: 80px; height: 80px; margin-left: 41px; border-radius: 15px; background: #e24343; display: flex; align-items: center; justify-content: center; }

.content { padding: 60px; display: flex; flex-direction: column; gap: 60px; }
.card { background: #fff; border-radius: 20px; box-shadow: 0 10px 15px -2.5px rgba(0, 0, 0, .1), 0 5px 10px -5px rgba(0, 0, 0, .1); }

.profile { height: 440px; display: flex; align-items: center; padding-left: 60px; }
.avatar { width: 320px; height: 320px; border-radius: 50%; background: #e5e7eb; color: #9ca3af; display: flex; align-items: center; justify-content: center; }
.who { margin-left: 60px; padding-top: 14px; color: #4b5563; letter-spacing: -0.45px; }
.who h3 { margin-bottom: 9px; font-size: 59px; font-weight: 700; line-height: 60px; letter-spacing: 0.55px; color: #1f2937; width: 574px; }
.view-btn { width: 495px; height: 105px; margin-left: 60px; padding-left: 30px; padding-top: 2px; }

.notices { height: 568px; }
.tabs { height: 102px; display: flex; border-bottom: 2.5px solid #e5e7eb; }
.tab { flex: 1; display: flex; align-items: center; justify-content: center; gap: 20px; padding-top: 5px; }
.tab span { padding-bottom: 3px; letter-spacing: -0.75px; }
.active { font-weight: 700; }
.tab b { width: 58px; height: 58px; border-radius: 50%; background: #3268e8; color: #fff; font-size: 29px; line-height: 60px; text-align: center; }
.notices ul { padding: 20px 40px 0; }
.notices li { height: 136px; padding-top: 40px; border-bottom: 2.5px solid #e5e7eb; display: flex; align-items: flex-start; color: #374151; }
.notices li:last-child { border: 0; }
.notices li svg { width: 35px; height: 40px; margin: 17px 22px 0 3px; color: #4a89f5; }
.notices li p { margin: 8px auto 0 0; letter-spacing: -0.6px; }
.notices li .loose { letter-spacing: -0.46px; }
.notices em { font-style: normal; height: 74px; border: 2.5px solid #e5e7eb; border-radius: 16px; padding-top: 2px; line-height: 68px; font-size: 34px; text-align: center; letter-spacing: -0.55px; }
.read { width: 251px; }
.unread { width: 287px; }

.modules { display: grid; grid-template-columns: repeat(3, 921px); gap: 40px; }
.module { height: 190px; padding: 35px 47px 0 40px; }
.mhead { height: 60px; display: flex; align-items: center; }
.em { width: 36.75px; height: 36.75px; margin: 2px 25px 0 6px; }
.mhead h4 { margin-right: auto; font-size: 34px; font-weight: 600; letter-spacing: -0.75px; color: #1f2937; padding-top: 2px; }
.go { width: 25px; height: 40px; color: #6b7280; }
.module p { margin-top: 14px; line-height: 45px; font-size: 29.3px; letter-spacing: -0.37px; color: #4b5563; }
.module .long { letter-spacing: -0.5px; }

.assistant { position: absolute; left: 3491px; top: 1579px; width: 112px; height: 100px; border-radius: 50px 0 0 50px; background: #202020; box-shadow: 0 15px 70px rgba(0, 0, 0, .32), 0 10px 30px rgba(0, 0, 0, .25); padding: 20px 0 0 32px; z-index: 3; }

/* Browser side rail */
.rail { width: 109px; padding-top: 4px; display: flex; flex-direction: column; align-items: center; }
.rcell { height: 100px; display: flex; align-items: center; }
.rline { width: 70px; height: 2px; margin: 30px 0 29px; background: #66676a; }
.rail .bottom { margin: auto 0 0; }
.add { margin-right: 2px; }
.gear { height: 101px; padding-top: 10px; }
```
